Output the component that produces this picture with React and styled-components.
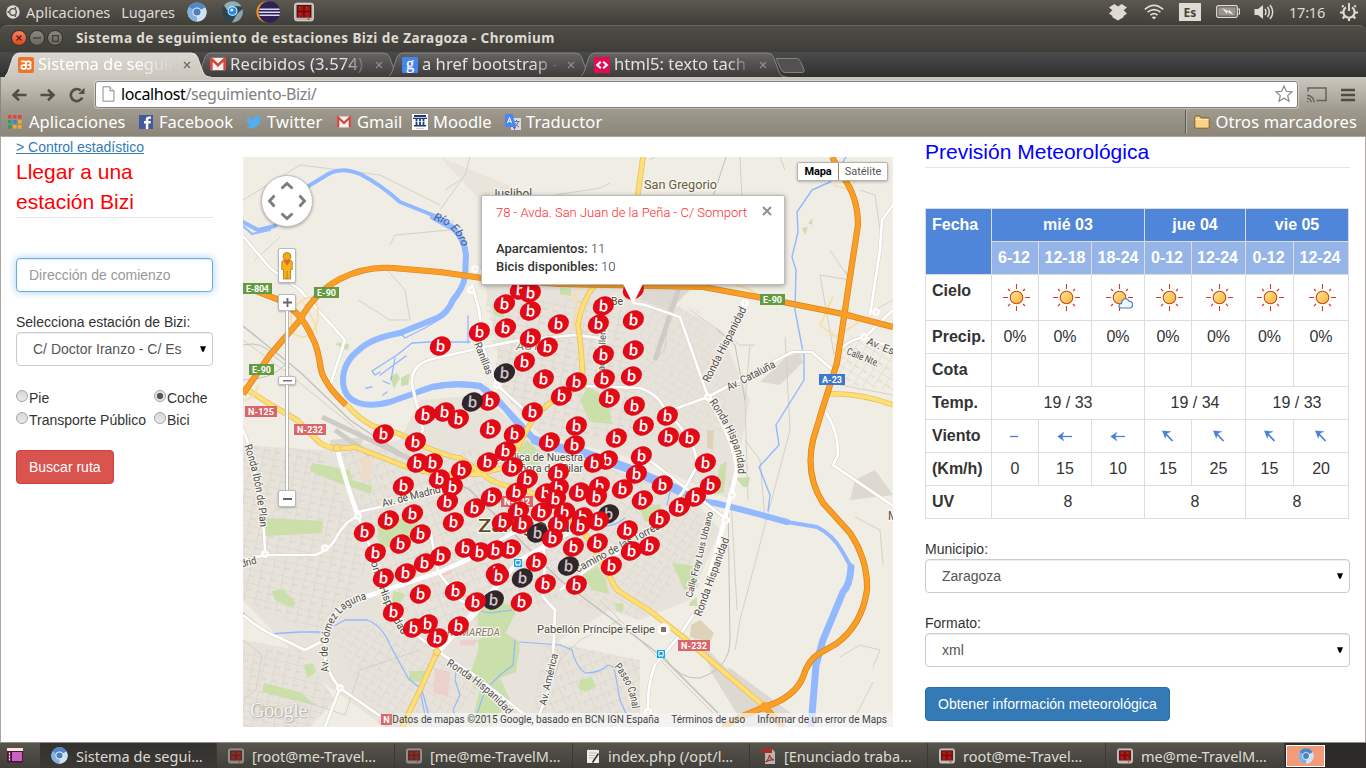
import React from "react";
import styled, { createGlobalStyle, css } from "styled-components";

const ubuntu = `"Noto Sans", "Open Sans", sans-serif`;
const arial = `"Liberation Sans", Arial, sans-serif`;
const roboto = `Roboto, "Liberation Sans", sans-serif`;

const GlobalStyle = createGlobalStyle`
  * { box-sizing: border-box; }
  body { margin: 0; overflow: hidden; background: #fff; }
  svg { display: block; flex: none; }
  button, input { font: inherit; }
`;

const Screen = styled.div`
  width: 1366px;
  height: 768px;
  display: flex;
  flex-direction: column;
  overflow: hidden;
  background: #3c3b37;
`;

/* ---------- desktop top panel ---------- */
const TopPanel = styled.header`
  height: 25px;
  display: flex;
  align-items: center;
  padding: 0 8px 2px 6px;
  background: linear-gradient(#5b5850, #3f3e39);
  color: #dfdbd2;
  font: 14.5px/22px ${ubuntu};
`;
const PanelText = styled.span`
  margin-left: ${(p) => p.$gap || 0}px;
  letter-spacing: ${(p) => p.$ls || 0}px;
  white-space: nowrap;
`;
const Slot = styled.span`
  display: flex;
  margin-left: ${(p) => p.$gap}px;
`;
const Tray = styled.div`
  margin-left: auto;
  display: flex;
  align-items: center;
`;
const LangBox = styled.span`
  margin-left: 15px;
  width: 22px;
  height: 18px;
  background: #dfdbd2;
  color: #45433d;
  font: bold 12px/20px ${ubuntu};
  text-align: center;
`;

/* ---------- window frame ---------- */
const TitleBar = styled.div`
  height: 27px;
  display: flex;
  align-items: center;
  gap: 2px;
  padding: 0 0 2px 11px;
  border-top: 1px solid #6a675e;
  border-radius: 7px 7px 0 0;
  background: linear-gradient(#504d46, #3e3d39);
`;
const WinButton = styled.span`
  width: 16px;
  height: 16px;
  border-radius: 50%;
  display: grid;
  place-items: center;
  border: 1px solid #33322e;
  background: ${(p) => (p.$close ? "linear-gradient(#f58362, #e0481c)" : "linear-gradient(#8b887d, #67655d)")};
`;
const TitleText = styled.span`
  margin-left: 11px;
  color: #dfdbd2;
  font: bold 13.5px/24px ${ubuntu};
  letter-spacing: 0.43px;
  white-space: nowrap;
`;

const TabStrip = styled.div`
  height: 25px;
  display: flex;
  padding-left: 5px;
  background: linear-gradient(#4c4b4b, #303030);
`;
const TabBox = styled.div`
  position: relative;
  z-index: ${(p) => (p.$active ? 2 : 1)};
  width: 192px;
  height: 25px;
  display: flex;
  align-items: center;
  padding-left: 13px;
`;
const TabShape = styled.svg`
  position: absolute;
  left: 0;
  top: 0;
`;
const TabIcon = styled.span`
  position: relative;
  width: 16px;
  height: 16px;
`;
const TabLabel = styled.span`
  position: relative;
  margin: -2px 0 0 4px;
  width: 138px;
  overflow: hidden;
  white-space: nowrap;
  color: ${(p) => (p.$active ? "#fff" : "#e3e1dc")};
  font: 16.6px/23px ${ubuntu};
  letter-spacing: ${(p) => p.$ls || 0}px;
  mask-image: linear-gradient(90deg, #000 ${(p) => p.$fade}%, transparent 100%);
`;
const TabClose = styled.svg`
  position: relative;
  margin-left: 7px;
`;

const Toolbar = styled.div`
  height: 59px;
  display: flex;
  flex-direction: column;
  background: linear-gradient(#cbc7be, #bdb8ae 20%, #9f998e 56%, #8b8679);
  border-left: 1px solid #8d887c;
`;
const AddressRow = styled.div`
  height: 32px;
  display: flex;
  align-items: center;
  padding: 3px 9px 0 10px;
`;
const AddressBox = styled.div`
  margin-left: 10px;
  width: 1203px;
  height: 27px;
  display: flex;
  align-items: center;
  padding: 0 4px 0 6px;
  background: #fff;
  border: 1px solid #85817a;
  border-radius: 3px;
  box-shadow: 0 0 0 1px rgba(255, 255, 255, 0.35);
  color: #808080;
  font: 16px/22px ${ubuntu};
  letter-spacing: -0.35px;
  padding-bottom: 2px;
`;
const Host = styled.span`
  margin-left: 6px;
  color: #000;
`;
const AddressIcon = styled.span`
  margin-left: auto;
`;
const BookmarkRow = styled.div`
  height: 27px;
  display: flex;
  align-items: center;
  padding: 0 9px 2px 7px;
  color: #fff;
  font: 16.5px/24px ${ubuntu};
`;
const Bookmark = styled.span`
  display: flex;
  align-items: center;
  gap: ${(p) => p.$gap || 5}px;
  width: ${(p) => (p.$w ? p.$w + "px" : "auto")};
  white-space: nowrap;
  letter-spacing: ${(p) => p.$ls || 0}px;
`;
const OtherBookmarks = styled.div`
  margin-left: auto;
  display: flex;
  align-items: center;
  padding-left: 8px;
  border-left: 1px solid #5d5a52;
  box-shadow: inset 1px 0 0 #b6b1a6;
`;

/* ---------- web page ---------- */
const Page = styled.main`
  height: 607px;
  display: flex;
  align-items: flex-start;
  background: #fff;
  border: 1px solid #aaa7a1;
  border-bottom-color: #8e8f80;
  padding: 0 15px;
  color: #333;
  font: 14px/20px ${arial};
`;
const LeftColumn = styled.section`
  width: 197px;
  display: flex;
  flex-direction: column;
  align-items: flex-start;
`;
const MapColumn = styled.section`
  margin: 20px 32px 0 30px;
  width: 650px;
`;
const RightColumn = styled.section`
  width: 425px;
  display: flex;
  flex-direction: column;
  align-items: flex-start;
`;
const StatsLink = styled.a`
  color: #337ab7;
  text-decoration: underline;
`;
const Legend = styled.h2`
  margin: 0 0 40px;
  width: 100%;
  border-bottom: 1px solid #e5e5e5;
  color: ${(p) => p.$color};
  font: 21px/30px ${arial};
`;
const control = css`
  width: 100%;
  height: 34px;
  border-radius: 4px;
  background: #fff;
  font: 14px/20px ${arial};
`;
const AddressInput = styled.input`
  ${control}
  padding: 6px 12px;
  border: 1px solid #66afe9;
  outline: 0;
  box-shadow: inset 0 1px 1px rgba(0, 0, 0, 0.075), 0 0 8px rgba(102, 175, 233, 0.6);
  &::placeholder { color: #999; opacity: 1; }
`;
const Label = styled.label`
  margin-top: 20px;
`;
const SelectBox = styled.div`
  ${control}
  display: flex;
  align-items: center;
  justify-content: space-between;
  padding: 0 6px 0 16px;
  border: 1px solid #ccc;
  box-shadow: inset 0 1px 1px rgba(0, 0, 0, 0.075);
  color: #555;
  white-space: nowrap;
`;
const RadioGrid = styled.div`
  margin: 21px 0 19px;
  display: grid;
  grid-template-columns: 138px auto;
  grid-auto-rows: 22px;
`;
const RadioItem = styled.label`
  display: flex;
  align-items: center;
  gap: 1px;
  white-space: nowrap;
`;
const RadioDot = styled.span`
  width: 12px;
  height: 12px;
  margin-top: -4px;
  border: 1px solid #a5a5a5;
  border-radius: 50%;
  background: ${(p) =>
    p.$on ? "radial-gradient(circle, #555 0 2.8px, #e4e4e4 3.6px)" : "linear-gradient(#d8d8d8, #e9e9e9)"};
`;
const ActionButton = styled.button`
  height: 34px;
  padding: 0 12px;
  margin-top: ${(p) => p.$top || 0}px;
  border: 1px solid ${(p) => (p.$danger ? "#d43f3a" : "#2e6da4")};
  border-radius: 4px;
  background: ${(p) => (p.$danger ? "#d9534f" : "#337ab7")};
  color: #fff;
  font: 14px/20px ${arial};
  white-space: nowrap;
`;

/* ---------- forecast table ---------- */
const Forecast = styled.table`
  width: 424px;
  table-layout: fixed;
  border-collapse: collapse;
  font: 16px/20px ${arial};
`;
const Row = styled.tr`
  height: ${(p) => p.$h || 33}px;
`;
const Cell = styled.td`
  padding: 6px 0 0;
  border: 1px solid #ddd;
  text-align: center;
  vertical-align: top;
`;
const HeadCell = styled.th`
  padding: 6px 0 0 6px;
  border: 1px solid #ddd;
  text-align: left;
  vertical-align: top;
`;
const DayCell = styled(HeadCell)`
  padding-left: ${(p) => (p.$left ? 6 : 0)}px;
  text-align: ${(p) => (p.$left ? "left" : "center")};
  background: #4f86d9;
  color: #fff;
`;
const HourCell = styled(DayCell)`
  padding-left: 0;
  padding-right: ${(p) => p.$pad || 0}px;
  background: #95b5e9;
`;
const IconWrap = styled.span`
  display: inline-block;
  vertical-align: top;
  margin-left: ${(p) => p.$shift || 0}px;
  margin-top: ${(p) => p.$down || 0}px;
`;

/* ---------- map ---------- */
const MapFrame = styled.div`
  position: relative;
  width: 650px;
  height: 570px;
  overflow: hidden;
  background: #f0ede5;
  font-family: ${roboto};
`;
const InfoWindow = styled.div`
  position: absolute;
  left: 238px;
  top: 38px;
  width: 304px;
  height: 90px;
  padding: 8px 14px;
  background: #fff;
  border: 1px solid #bbb;
  border-radius: 2px;
  box-shadow: 0 1px 5px rgba(0, 0, 0, 0.35);
  color: #333;
  font: 13px/18px ${roboto};
`;
const InfoTitle = styled.div`
  margin-bottom: 18px;
  color: #ff2a2a;
  font-weight: 300;
  white-space: nowrap;
`;
const InfoLine = styled.div`
  font-weight: 300;
  b { font-weight: 500; }
`;
const InfoClose = styled.svg`
  position: absolute;
  right: 12px;
  top: 10px;
`;
const InfoTail = styled.svg`
  position: absolute;
  left: 379px;
  top: 126px;
`;
const PanControl = styled.div`
  position: absolute;
  left: 18px;
  top: 18px;
  width: 52px;
  height: 52px;
  border-radius: 50%;
  background: #fff;
  border: 1px solid #c4c1bb;
  box-shadow: 0 1px 3px rgba(0, 0, 0, 0.3);
`;
const ZoomControl = styled.div`
  position: absolute;
  left: 35px;
  top: 91px;
  width: 18px;
  display: flex;
  flex-direction: column;
  align-items: center;
`;
const SmallButton = styled.div`
  width: ${(p) => p.$w || 18}px;
  height: ${(p) => p.$h}px;
  margin-top: ${(p) => p.$top || 0}px;
  display: grid;
  place-items: center;
  background: #fff;
  border: 1px solid #bdbab4;
  border-radius: 2px;
  box-shadow: 0 1px 2px rgba(0, 0, 0, 0.25);
`;
const Track = styled.div`
  width: 4px;
  height: ${(p) => p.$h}px;
  background: #fff;
  border: solid #bbb8b2;
  border-width: 0 1px;
`;
const MapTypes = styled.div`
  position: absolute;
  left: 554px;
  top: 5px;
  display: flex;
  height: 19px;
  border: 1px solid #b5b2ad;
  border-radius: 2px;
  background: #fff;
  box-shadow: 0 1px 3px rgba(0, 0, 0, 0.25);
  font: 11px/17px ${roboto};
`;
const MapType = styled.span`
  width: ${(p) => p.$w}px;
  text-align: center;
  color: ${(p) => (p.$on ? "#000" : "#565656")};
  font-weight: ${(p) => (p.$on ? 700 : 400)};
  letter-spacing: ${(p) => (p.$on ? -0.15 : 0)}px;
  border-left: ${(p) => (p.$on ? "0" : "1px solid #a58654")};
`;
const Attribution = styled.div`
  position: absolute;
  right: 0;
  bottom: 0;
  height: 14px;
  width: 507px;
  display: flex;
  background: linear-gradient(90deg, rgba(245, 245, 245, 0), rgba(245, 245, 245, 0.75) 40px);
  color: #444;
  font: 10px/14px ${roboto};
  white-space: nowrap;
  padding-right: 6px;
  justify-content: flex-end;
  gap: 12px;
`;
const GoogleMark = styled.div`
  position: absolute;
  left: 7px;
  top: 541px;
  color: rgba(255, 255, 255, 0.85);
  font: 20px/24px "Liberation Serif", serif;
  letter-spacing: -0.3px;
  text-shadow: 0 0 2px #aaa, 1px 1px 1px #b5b5b5;
`;

/* ---------- bottom task bar ---------- */
const TaskBar = styled.footer`
  height: 25px;
  display: flex;
  background: linear-gradient(#57544c, #403f3a);
  color: #dfdbd2;
  font: 14.5px/24px ${ubuntu};
`;
const DesktopButton = styled.div`
  width: 40px;
  padding: 5px 0 0 7px;
`;
const Task = styled.div`
  width: ${(p) => p.$w}px;
  display: flex;
  align-items: center;
  gap: 8px;
  padding-left: ${(p) => p.$pl || 11}px;
  background: ${(p) => (p.$active ? "linear-gradient(#33322e, #3a3935)" : "transparent")};
  border-right: 1px solid #3a3935;
  white-space: nowrap;
`;
const TaskIcon = styled.span`
  opacity: ${(p) => (p.$dim ? 0.6 : 1)};
`;
const Workspaces = styled.div`
  flex: 1;
  display: flex;
  padding-left: 1px;
  background: #2c2b29;
`;
const Workspace = styled.div`
  width: 39px;
  height: 22px;
  margin-top: 2px;
  display: grid;
  place-items: center;
  border: 1px solid #fff;
  background: #f39a78;
`;

/* ---------- small drawings ---------- */
const Chromium = ({ s = 20 }) => (
  <svg width={s} height={s} viewBox="0 0 20 20">
    <circle cx="10" cy="10" r="9.6" fill="#b9d5ef" />
    <path d="M10 10 L1.7 5.2 A9.6 9.6 0 0 1 18.4 5.4 Z" fill="#5187c4" />
    <path d="M10 10 L18.4 5.4 A9.6 9.6 0 0 1 10 19.6 Z" fill="#cfe2f5" />
    <path d="M10 10 L10 19.6 A9.6 9.6 0 0 1 1.7 5.2 Z" fill="#86b0dd" />
    <circle cx="10" cy="10" r="4.6" fill="#e8f2fb" />
    <circle cx="10" cy="10" r="3.6" fill="#4a80c0" />
  </svg>
);
const DarkOrb = () => (
  <svg width="23" height="22" viewBox="0 0 23 22">
    <circle cx="11.5" cy="11" r="10.5" fill="#2f444d" />
    <path d="M3 4.5 A10.5 10.5 0 0 1 20.5 5.5 L12 5 L6 9 Z" fill="#8fb0bb" />
    <path d="M11 21.400 L16 13 L21.500 8 A10.500 10.500 0 0 1 11 21.400" fill="#8ea2aa" />
    <circle cx="11.5" cy="10" r="5" fill="#c6e9fa" />
    <circle cx="11.5" cy="10" r="3.8" fill="#1b8be8" />
    <circle cx="10.8" cy="9" r="1.6" fill="#d9f3ff" />
  </svg>
);
const Eclipse = () => (
  <svg width="25" height="22" viewBox="0 0 25 22">
    <circle cx="11" cy="11" r="10.6" fill="#f7941e" />
    <circle cx="13.4" cy="11" r="10.8" fill="#2c2255" />
    <path d="M3.5 8.2h20M3 11.2h21M3.5 14.2h20" stroke="#dcd9ee" strokeWidth="1.5" />
  </svg>
);
const RedTerm = ({ s = 20 }) => (
  <svg width={s} height={s} viewBox="0 0 20 20">
    <rect x="0.7" y="1.2" width="18.6" height="17.6" rx="2" fill="#b8b6b0" stroke="#dedcd6" />
    <rect x="2.6" y="3" width="14.8" height="12.6" fill="#5c0b0b" />
    <path d="M4 4h5.4v5H4zM10.6 4H16v5h-5.400zM4 10h5.400v5H4zM10.600 10H16v5h-5.400z" fill="#a51414" />
    <path d="M5 5l2 1.500M12 5l2 1.500M5 11l2 1.500M12 11l2 1.500" stroke="#c93a3a" strokeWidth=".8" />
    <path d="M13.500 17.300h2" stroke="#e22" strokeWidth="1.400" />
  </svg>
);
const UbuntuMark = () => (
  <svg width="14" height="14" viewBox="0 0 14 14">
    <circle cx="7" cy="7" r="6.700" fill="#dfdbd2" />
    <circle cx="7" cy="7" r="3.300" fill="none" stroke="#4c4a43" strokeWidth="1.300" />
    <path d="M3.300 7H1.500M8.900 3.800l.9-1.600M8.900 10.200l.9 1.600" stroke="#dfdbd2" strokeWidth="2.400" />
    <circle cx="2.400" cy="7" r="1" fill="#4c4a43" />
    <circle cx="9.300" cy="3" r="1" fill="#4c4a43" />
    <circle cx="9.300" cy="11" r="1" fill="#4c4a43" />
  </svg>
);
const Dropbox = () => (
  <svg width="18" height="18" viewBox="0 0 18 18" fill="#dfdbd2">
    <path d="M5.300 1L0 4.400 3.400 7.300 0 10.600 3.400 13 V14.200L9 17.400l5.600-3.200V13L18 10.600 14.600 7.300 18 4.400 12.700 1 9 3.600z" />
  </svg>
);
const Wifi = () => (
  <svg width="20" height="16" viewBox="0 0 20 16" fill="none" stroke="#dfdbd2" strokeWidth="1.700">
    <path d="M.8 5.400Q10-2.800 19.200 5.400M3.600 8.200q6.400-5.200 12.800 0M6.400 11q3.600-2.800 7.200 0" />
    <path d="M10 15.500l-2.300-2.300q2.300-1.600 4.600 0z" fill="#dfdbd2" stroke="none" />
  </svg>
);
const Battery = () => (
  <svg width="24" height="13" viewBox="0 0 24 13">
    <rect x=".7" y=".7" width="20.600" height="11.600" rx="1.500" fill="none" stroke="#dfdbd2" strokeWidth="1.300" />
    <path d="M21.500 4h2v5h-2" fill="none" stroke="#dfdbd2" strokeWidth="1.200" />
    <rect x="2.300" y="2.300" width="17.400" height="8.400" fill="#9b978d" />
    <path d="M6 3l7 3.400V4.500L17.500 10l-6.500-3.200V9z" fill="#f4f1ea" />
  </svg>
);
const Volume = () => (
  <svg width="21" height="18" viewBox="0 0 21 18">
    <path d="M.5 6H4L9 2v14l-5-4H.5z" fill="#dfdbd2" />
    <path d="M11 6q2 3 0 6M13.500 4q3.600 5 0 10M16 2q5.400 7 0 14" fill="none" stroke="#dfdbd2" strokeWidth="1.500" />
  </svg>
);
const Gear = () => (
  <svg width="18" height="18" viewBox="0 0 18 18" fill="none" stroke="#dfdbd2">
    <path d="M6 4.400a5.600 5.600 0 1 0 6 0" strokeWidth="2.200" />
    <path d="M9 0v8" strokeWidth="1.900" />
    <path d="M3.600 3.900L2.200 2.500M14.400 3.900l1.400-1.400M3 9.500H0M18 9.500h-3M4.500 13.600L2.700 15.400M13.500 13.600l1.800 1.800M9 15.300V18" strokeWidth="2.200" />
  </svg>
);
const NavArrow = ({ back }) => (
  <svg width="16" height="14" viewBox="0 0 16 14" fill="none" stroke="#504e49" strokeWidth="2.600">
    <path d={back ? "M15.500 7H2.500M8 1.800L2.500 7 8 12.200" : "M.5 7h13M8 1.800L13.500 7 8 12.200"} />
  </svg>
);
const Reload = () => (
  <svg width="16" height="16" viewBox="0 0 16 16">
    <path d="M13.300 10.500a6 6 0 1 1-1.600-7" fill="none" stroke="#504e49" strokeWidth="2.600" />
    <path d="M15.500.8V7H9.300z" fill="#504e49" />
  </svg>
);
const PageIcon = () => (
  <svg width="13" height="16" viewBox="0 0 13 16">
    <path d="M1 .8h7l4 4v10.400H1z" fill="#fff" stroke="#8a8a8a" />
    <path d="M8 .8v4h4" fill="#eee" stroke="#8a8a8a" />
  </svg>
);
const Gmail = ({ w = 14, h = 12 }) => (
  <svg width={w} height={h} viewBox="0 0 14 12">
    <rect x=".3" y=".5" width="13.400" height="11" rx="1" fill="#f3f1ee" />
    <path d="M1.200 11.500V1.500L7 7l5.800-5.500v10" fill="none" stroke="#d8433a" strokeWidth="2.200" />
  </svg>
);
const Facebook = () => (
  <svg width="14" height="14" viewBox="0 0 14 14">
    <rect width="14" height="14" fill="#3f5b9b" />
    <path d="M9.300 14V8.500h2.200l.4-2.400H9.300V4.700q0-1 1.200-1H12V1.500h-2Q6.800 1.500 6.800 4.400v1.700H5v2.400h1.800V14z" fill="#fff" />
  </svg>
);
const Twitter = () => (
  <svg width="16" height="14" viewBox="0 0 24 20">
    <path d="M24 2.400a9.600 9.600 0 0 1-2.800.8A5 5 0 0 0 23.300.5a9.700 9.700 0 0 1-3.100 1.200 4.900 4.900 0 0 0-8.400 4.500A14 14 0 0 1 1.700 1a5 5 0 0 0 1.500 6.600A4.800 4.800 0 0 1 1 7v.1a4.900 4.900 0 0 0 3.900 4.800 4.800 4.800 0 0 1-2.200.1 4.900 4.900 0 0 0 4.600 3.400A9.900 9.900 0 0 1 0 17.500 14 14 0 0 0 21.500 5z" fill="#55acee" />
  </svg>
);
const Apps = () => (
  <svg width="14" height="14" viewBox="0 0 14 14">
    {["#e2453c", "#e2453c", "#e2453c", "#2f9e59", "#3f7fe8", "#f2ab27", "#2f9e59", "#f2ab27", "#f2ab27"].map((c, i) => (
      <rect key={i} x={(i % 3) * 5} y={Math.floor(i / 3) * 5} width="3.600" height="3.600" fill={c} />
    ))}
  </svg>
);
const Moodle = () => (
  <svg width="16" height="16" viewBox="0 0 16 16">
    <rect width="16" height="16" fill="#fff" />
    <path d="M2 1h12v2H2zM1 3.800h14v1.200H1zM2 11h12v1.500H2z" fill="#1d3a6e" />
    <path d="M4.500 5v6M8 5v6M11.500 5v6" stroke="#1d3a6e" strokeWidth="1.800" />
    <path d="M3 7.500h10" stroke="#fff" strokeWidth=".6" />
    <path d="M4 14.500h8" stroke="#c9cede" />
  </svg>
);
const Translate = () => (
  <svg width="16" height="16" viewBox="0 0 16 16">
    <rect x="6" y="4" width="10" height="12" fill="#dcdcdc" />
    <path d="M8.500 7.500h6M11.500 6v1.500M13.500 7.500q-1 4-4.500 5.500M10 9q1.500 3 4 4" fill="none" stroke="#5f7a94" />
    <path d="M0 0h7.500l3.500 13H0z" fill="#4a87f3" />
    <path d="M2.500 9l2-5.500 2 5.500M3.200 7.300h2.600" fill="none" stroke="#fff" />
    <path d="M8 13h3l-1.500 3z" fill="#3367c8" />
  </svg>
);
const Folder = () => (
  <svg width="16" height="14" viewBox="0 0 16 14">
    <path d="M.8 2.500Q.8 1 2 1h3.500l1.500 2h7.200q1 0 1 1v8q0 1.200-1 1.200H2Q.8 13.200.8 12z" fill="#fbd28a" stroke="#8b5a1e" />
    <path d="M1.500 4.500h13" stroke="#fff0c9" />
  </svg>
);
const Xampp = () => (
  <svg width="16" height="16" viewBox="0 0 16 16">
    <rect width="16" height="16" rx="2" fill="#ee7427" />
    <path d="M3.200 4.300H6q2 0 2 2t-2 1.700H5.300q-2 0-2 1.900t2 1.900H6q2 0 2-2V6.300q0-2 2-2h.7q2 0 2 1.800T10.700 8H9.500h1.200q2 0 2 1.900t-2 1.900H8.800" fill="none" stroke="#fff" strokeWidth="1.700" />
  </svg>
);
const GoogleTile = () => (
  <svg width="16" height="16" viewBox="0 0 16 16">
    <rect width="16" height="16" rx="1" fill="#4684ee" />
    <text x="8" y="11.500" textAnchor="middle" fill="#fff" stroke="#fff" strokeWidth=".3" fontFamily="Liberation Serif, serif" fontSize="16">g</text>
  </svg>
);
const CodeTile = () => (
  <svg width="16" height="16" viewBox="0 0 16 16">
    <rect width="16" height="16" fill="#e40b53" />
    <path d="M6.800 4.800L3.200 8l3.600 3.200M9.200 4.800L12.800 8l-3.600 3.200" fill="none" stroke="#fff" strokeWidth="2.200" />
  </svg>
);
const Star = () => (
  <svg width="18" height="18" viewBox="0 0 18 18">
    <path d="M9 1l2.300 5.300 5.700.5-4.300 3.800 1.300 5.700L9 13.300l-5 3 1.300-5.700L1 6.800l5.700-.5z" fill="#fff" stroke="#8a8a8a" strokeWidth="1.200" />
  </svg>
);
const Cast = () => (
  <svg width="20" height="16" viewBox="0 0 20 16" fill="none" stroke="#66635c" strokeWidth="1.500">
    <path d="M1 4.500V1h18v12.500H9.500" />
    <path d="M0 8.200a7 7 0 0 1 7 7M0 11.200a4 4 0 0 1 4 4M0 14.200l1 1" />
  </svg>
);
const Caret = () => (
  <svg width="6" height="6" viewBox="0 0 6 6"><path d="M0 .3h6L3.700 5.800H2.300z" fill="#000" /></svg>
);
const Pdf = () => (
  <svg width="15" height="16" viewBox="0 0 15 16">
    <path d="M4 1h7l3 3v12H4z" fill="#b9b5ae" />
    <rect x="0" y="0" width="11" height="5" fill="#a12f2b" />
    <path d="M4.500 14q3-2 4-7 1 4 4.500 5-5-.5-8.500 2" fill="none" stroke="#a12f2b" strokeWidth="1.200" />
  </svg>
);
const Editor = () => (
  <svg width="14" height="16" viewBox="0 0 14 16">
    <path d="M1 2h12v13H1z" fill="#ececea" />
    <path d="M2 1.500h10" stroke="#777" strokeDasharray="1 1" />
    <path d="M3 5h8M3 7.500h6M3 10h5" stroke="#bbb" />
    <path d="M12.500 5.500l-5 7.500-1 1.500" stroke="#333" strokeWidth="1.600" />
  </svg>
);

/* ---------- browser tabs ---------- */
function Tab({ active, icon, label, fade, ls }) {
  return (
    <TabBox $active={active}>
      <TabShape width="208" height="25" viewBox="0 0 208 25">
        <defs>
          <linearGradient id="tabOn" x2="0" y2="1"><stop stopColor="#dad7d0" /><stop offset="1" stopColor="#cbc7be" /></linearGradient>
          <linearGradient id="tabOff" x2="0" y2="1"><stop stopColor="#666461" /><stop offset="1" stopColor="#3d3c3b" /></linearGradient>
        </defs>
        <path
          d="M-4 25 Q1 25 3 20 L8 5 Q10 1 14 1 H186 Q191 1 192.500 5 L198 20 Q200 25 206 25"
          fill={active ? "url(#tabOn)" : "url(#tabOff)"}
          stroke={active ? "#e9e7e2" : "#8a8885"}
          strokeWidth=".9"
        />
      </TabShape>
      <TabIcon>{icon}</TabIcon>
      <TabLabel $active={active} $fade={fade} $ls={ls}>{label}</TabLabel>
      <TabClose width="8" height="8" viewBox="0 0 8 8" stroke={active ? "#6b6963" : "#8d8b87"} strokeWidth="1.300">
        <path d="M1 1l6 6M7 1L1 7" />
      </TabClose>
    </TabBox>
  );
}

/* ---------- map data, in map coordinates offset by (243, 157) ---------- */
const stations = [
  [520, 290], [530, 293], [504, 304], [530, 311], [558, 324], [505, 328], [479, 332], [530, 338], [547, 347],
  [440, 346], [524, 362], [504, 373, 1], [543, 379], [561, 396], [489, 401], [472, 402, 1], [532, 412],
  [425, 415], [444, 412], [458, 419], [383, 434], [415, 442], [490, 429], [514, 434], [549, 442],
  [505, 451], [633, 290], [603, 306], [598, 324], [633, 320], [603, 355], [633, 350], [631, 376], [604, 379],
  [576, 382], [609, 398], [634, 406], [667, 416], [643, 426], [668, 437], [689, 438], [616, 438],
  [576, 426], [574, 445], [641, 456], [417, 463], [432, 463], [461, 470], [439, 479], [452, 487], [403, 486],
  [487, 462], [512, 467], [527, 479], [558, 473], [447, 502], [491, 497], [474, 508], [516, 492], [545, 493],
  [558, 488], [555, 499], [453, 522], [412, 514], [388, 520], [364, 532], [502, 522], [518, 511], [522, 524],
  [541, 512], [564, 512], [537, 533, 1], [558, 524], [552, 538], [420, 534], [400, 544], [375, 553], [440, 556],
  [465, 548], [479, 552], [495, 550], [510, 549], [424, 563], [405, 573], [383, 578], [496, 573], [498, 576],
  [536, 562], [522, 578, 1], [545, 584], [568, 566, 1], [420, 594], [455, 591], [493, 600, 1], [475, 602],
  [521, 602], [393, 612], [427, 624], [413, 628], [458, 626], [437, 638], [705, 463], [607, 460], [594, 463],
  [636, 474], [662, 485], [710, 485], [695, 497], [679, 507], [622, 489], [642, 500], [599, 486], [579, 492],
  [596, 497], [608, 514, 1], [582, 517], [659, 519], [598, 521], [580, 526], [627, 530], [597, 543], [573, 547],
  [631, 551], [649, 546], [611, 566], [576, 585],
];

const River = "M433 217 L453 228 Q465 240 466 255 L465 277 Q463 288 453 300 Q447 314 437 318 L400 333 Q372 338 360 349 Q343 362 343 380 Q343 398 359 403 Q372 407 390 402 L432 387 Q455 382 480 386 Q495 395 505 408 Q520 428 535 440 Q553 449 575 450 L627 468 L683 492 Q700 502 715 503 L743 510 L787 522";

const greens = [
  "M265 518 L323 521 L322 533 L265 536 Z", "M312 463 L350 470 L352 480 L372 486 L371 494 L333 481 L310 471 Z",
  "M377 524 L420 515 L412 541 L380 549 Z", "M475 609 L520 602 L505 635 L520 650 L512 672 L498 662 L475 690 L470 674 L482 640 Z",
  "M478 640 L500 630 L520 642 L516 672 L500 678 L510 700 L490 727 L470 727 L480 690 Z",
  "M580 400 L588 387 L608 398 L612 424 L590 422 Z", "M672 563 L696 566 L698 587 L684 590 Z",
  "M583 575 L597 566 L606 580 L609 594 L592 590 Z", "M580 680 L592 677 L596 687 L585 692 L578 688 Z",
  "M390 377 L397 373 L400 378 L394 389 Z", "M401 378 L410 373 L408 385 L401 386 Z", "M560 288 L571 289 L571 296 L560 294 Z",
  "M394 591 L405 594 L399 605 L390 608 Z", "M410 671 L426 671 L420 682 L408 681 Z", "M303 665 L313 663 L316 672 L308 678 Z",
  "M272 591 L283 589 L296 603 L292 608 L275 600 Z", "M640 510 L660 504 L663 520 L645 522 Z", "M720 465 L727 461 L724 492 L714 495 Z",
  "M808 223 L813 218 L812 225 Z M802 228 L808 227 L805 235 Z", "M615 603 L624 604 L622 613 L616 610 Z", "M343 343 L349 344 L348 350 L342 349 Z M335 344 L341 342 L341 347 Z",
  "M527 440 L540 452 L540 475 L510 460 Z", "M492 307 L503 300 L504 318 L494 315 Z", "M690 602 L697 597 L697 606 L689 606 Z",
  "M264 683 L300 692 L316 706 L306 703 L262 692 Z M736 478 L750 477 L748 487 L743 487 Z",
];

const minorWhite = [
  "M243 560 L265 555 L315 555 Q328 551 335 540 Q345 520 358 517", "M337 448 Q345 480 358 516 L375 560 Q385 600 410 630 L440 653 L470 672 Q500 695 540 727",
  "M358 512 L403 502 L447 489", "M325 727 L340 688 L380 716", "M340 688 Q322 668 325 640 Q328 605 365 597 L440 572 L520 530",
  "M265 555 Q265 510 247 440 L243 430", "M417 445 L423 430 L412 385 Q410 365 432 359 L480 348 L520 340 L575 335 L600 338",
  "M472 284 L479 310 L484 350 L497 385 L530 415", "M480 275 L490 240", "M583 386 L640 388 Q660 395 666 412 Q697 440 697 466 L683 492 L640 545 L600 560 L560 590",
  "M633 303 L645 305 L680 317 L708 397", "M666 412 L708 397 L792 352 L812 352 L835 372", "M708 397 Q735 440 737 470 L722 530 L703 600 L680 635 L655 665 Q647 685 648 712",
  "M835 357 Q845 340 865 337 L893 310 M865 337 L893 348", "M870 315 L880 250 L882 220 L893 205", "M820 405 Q838 425 838 455 L833 465 L893 506",
  "M645 457 L725 518", "M440 650 L475 615 L520 560 L560 538 L600 520", "M500 540 L540 514 M430 530 L438 572 L460 600 L475 608",
  "M540 514 Q547 560 543 597 L555 610 L552 680 L535 727", "M243 615 Q263 632 280 638 L305 650 L325 640", "M243 236 L270 268 L300 290 L345 340 L330 385",
];

const thin = [
  "M243 200 L300 165 L380 175 L440 205", "M280 237 L255 260 M390 245 L395 235 L450 230 L453 220", "M358 300 L390 320 L410 320 L405 290 L382 264",
  "M440 210 L465 175 L470 157 M445 190 L460 180", "M555 195 L600 188 L610 183", "M650 160 L655 157 M740 157 L745 260 M785 170 L780 157",
  "M670 300 L665 350 L640 375 M690 310 L740 345 L755 345", "M860 190 L875 195 L880 230 M830 250 L850 280 L845 270", "M750 345 L745 400 L748 500",
  "M785 337 L790 430 L740 620 L735 650", "M745 440 L760 460 L765 520", "M850 280 L820 275 L835 360", "M730 480 L737 610 M840 657 L860 645 L880 650 L873 667 M873 682 L850 727",
  "M893 300 L875 310 M840 385 L893 395 M855 517 L880 530 L883 565", "M243 340 L290 375 L370 440", "M243 640 L262 655 L256 690 L243 700",
  "M300 700 L345 715 L360 670 L420 650", "M620 620 L580 640 L560 660 L540 720", "M600 600 L650 650 L720 720",
];

const labels = [
  { t: "San Gregorio", x: 644, y: 189, s: 12.5, w: 73, c: "#695c40" },
  { t: "Juslibol", x: 491, y: 198, s: 12.5, w: 41, c: "#554e42" },
  { t: "ACTUR", x: 516, y: 350, s: 10, w: 40, c: "#8b8070", i: 1 },
  { t: "Basílica de Nuestra", x: 494, y: 461, s: 11, w: 89 },
  { t: "Señora del Pilar", x: 508, y: 472, s: 11, w: 75 },
  { t: "Zaragoza", x: 478, y: 532, s: 19, w: 92, c: "#5f4d2b", b: 500 },
  { t: "ROMAREDA", x: 447, y: 636, s: 10, w: 53, c: "#857a69", i: 1 },
  { t: "Pabellón Príncipe Felipe", x: 537, y: 633, s: 11.5, w: 118 },
  { t: "Av. Cataluña", x: 729, y: 391, s: 11, w: 53, r: -27 },
  { t: "Ronda Hispanidad", x: 709, y: 383, s: 11, w: 83, r: -63 },
  { t: "Ronda Hispanidad", x: 701, y: 617, s: 11, w: 83, r: -70 },
  { t: "Calle Fray Luis Urbano", x: 692, y: 598, s: 9.5, w: 88, r: -76 },
  { t: "Calle Nte.", x: 846, y: 354, s: 10, w: 34, r: 22 },
  { t: "Av. Estudiantes", x: 866, y: 344, s: 10.5, w: 74, r: 22 },
  { t: "Av. de Madrid", x: 383, y: 507, s: 11, w: 60, r: -14 },
  { t: "Ranillas", x: 474, y: 344, s: 10.5, w: 34, r: 68 },
  { t: "Av. América", x: 546, y: 706, s: 10.5, w: 53, r: -77 },
  { t: "Camino de las Torres", x: 577, y: 573, s: 11, w: 95, r: -28 },
  { t: "Salvador Allende", x: 604, y: 388, s: 10, w: 68, r: -88 },
  { t: "Madrid", x: 229, y: 571, s: 10.5, w: 29, r: -15 },
  { t: "M", x: 888, y: 520, s: 12, w: 10, c: "#6b5537" },
  { t: "Be", x: 611, y: 305, s: 10, w: 12 },
];
const curved = [
  { id: "ebro", d: "M433 220 Q458 226 464 253", t: "Río Ebro", w: 42, c: "#42608f", i: 1 },
  { id: "ibon", d: "M244 446 Q257 480 260 528", t: "Ronda Ibón de Plan", w: 83 },
  { id: "gomez", d: "M329 672 Q320 610 367 599", t: "Av. de Gómez Laguna", w: 92 },
  { id: "hisp", d: "M446 665 Q488 690 510 718", t: "Ronda Hispanidad", w: 80 },
  { id: "hisp2", d: "M709 402 Q740 445 738 476", t: "Ronda Hispanidad", w: 79 },
  { id: "hisp3", d: "M369 556 Q384 610 403 636", t: "Ronda Hispanidad", w: 86 },
  { id: "canal", d: "M614 667 Q630 685 632 709", t: "Paseo Canal", w: 46 },
];
const shields = [
  ["E-804", 243, 283, 29, "#649b42"], ["E-90", 314, 287, 25, "#649b42"], ["E-90", 249, 364, 25, "#649b42"], ["E-90", 760, 294, 25, "#649b42"],
  ["N-125", 245, 406, 32, "#d9666a"], ["N-232", 294, 424, 32, "#d9666a"], ["N-232", 678, 640, 32, "#d9666a"], ["N-232", 501, 496, 32, "#d9666a"],
  ["N", 381, 714, 11, "#d9666a"], ["A-23", 819, 374, 26, "#3e78cc"],
];

function CityMap() {
  const halo = { paintOrder: "stroke", stroke: "#f7f5f0", strokeWidth: 2.5, strokeLinejoin: "round" };
  return (
    <svg width="650" height="570" viewBox="243 157 650 570" fontFamily="Roboto, sans-serif">
      <defs>
        <pattern id="gridA" width="13" height="11" patternUnits="userSpaceOnUse" patternTransform="rotate(-22)">
          <path d="M0 0H13M0 0V11M6 0V5" stroke="#d6d2c9" strokeWidth="1" fill="none" />
        </pattern>
        <pattern id="gridB" width="11" height="14" patternUnits="userSpaceOnUse" patternTransform="rotate(12)">
          <path d="M0 0H11M0 0V14M0 7H6" stroke="#d5d1c8" strokeWidth="1" fill="none" />
        </pattern>
        <pattern id="gridC" width="15" height="9" patternUnits="userSpaceOnUse" patternTransform="rotate(-58)">
          <path d="M0 0H15M0 0V9M8 0V6" stroke="#d9d5cc" strokeWidth="1" fill="none" />
        </pattern>
      </defs>
      <rect x="243" y="157" width="650" height="570" fill="#f0ede5" />
      <path d="M440 157 L520 190 L560 230 L545 275 L480 200 Z" fill="#e9e5dc" />
      <g fill="#e8e3da">
        <path d="M243 445 L320 450 L400 440 L420 400 L480 395 L540 445 L690 495 L720 530 L690 600 L640 620 L610 610 L560 640 L530 727 L385 727 L320 680 L243 600 Z" />
        <path d="M485 285 L640 285 L720 330 L750 400 L730 500 L640 460 L540 435 L505 395 Z" />
        <path d="M540 640 L640 660 L640 727 L530 727 Z M243 640 L300 650 L335 700 L310 727 L243 727 Z" />
      </g>
      <path d="M243 445 L320 450 L370 560 L330 640 L243 600 Z M243 650 L300 650 L335 700 L310 727 L243 727 Z" fill="url(#gridB)" />
      <path d="M340 450 L540 450 L560 600 L440 640 L380 590 Z M545 640 L640 660 L640 727 L530 727 Z" fill="url(#gridA)" />
      <path d="M540 445 L690 495 L710 540 L640 620 L560 600 Z M330 630 L400 620 L480 690 L440 727 L380 727 Z M830 330 L893 350 L893 390 L840 385 Z" fill="url(#gridC)" />
      <path d="M485 300 L620 300 L640 440 L540 435 L500 390 Z" fill="url(#gridB)" />
      <path d="M640 290 L700 310 L735 430 L640 440 Z" fill="url(#gridC)" opacity=".7" />
      <g fill="#ddd8d0">
        <path d="M645 285 L690 290 L670 310 L640 300 Z M710 670 L730 668 L800 720 L745 727 Z M690 632 L765 707 L740 715 L712 670 Z M330 440 L365 437 L360 447 L330 452 Z M785 358 L800 352 L803 362 L780 385 L760 382 Z M855 480 L875 470 L893 495 L850 500 Z" />
      </g>
      <g fill="#ded3b8">
        <path d="M691 625 L700 620 L714 633 L710 642 L690 637 Z M259 706 L278 706 L282 716 L262 716 Z M707 430 L714 430 L713 450 L707 448 Z" />
        <path d="M362 456 L373 459 L369 480 L360 478 Z" fill="#eedcc6" />
        <path d="M435 668 L450 672 L448 697 L433 692 Z M438 570 L452 565 L452 574 L440 577 Z M460 640 L478 640 L474 646 L460 645 Z" fill="#ecd0cb" />
      </g>
      {greens.map((d, i) => <path key={i} d={d} fill="#cadfaa" />)}
      <g fill="none" stroke="#d5d1c6" strokeWidth="1">{thin.map((d, i) => <path key={i} d={d} />)}</g>
      <g fill="none" stroke="#c2c0be" strokeWidth="1.500">
        <path d="M243 326 L300 372 L350 420 Q400 455 470 490 L560 580 L660 655 L720 715" />
        <path d="M665 658 Q680 680 700 678 Q730 668 730 640 L728 500 M726 157 L712 200 M717 330 L735 345 L745 400" strokeWidth="1" />
        <path d="M243 345 Q262 340 275 357 L290 368 M243 380 Q270 380 285 365" strokeWidth="1" />
      </g>
      <path d="M322 417 L425 466 M335 430 L370 455 M680 285 L655 360" stroke="#cfccc7" strokeWidth="5" fill="none" />

      <g fill="none" stroke="#92b8ff" strokeLinecap="round" strokeLinejoin="round">
        <path d="M243 222 L258 230 L275 226 Q290 200 307 187 L330 173 Q343 167 360 174 Q380 184 400 202 L430 214 L445 220" strokeWidth="4" />
        <path d="M243 226 L252 234 L270 230" strokeWidth="2" />
        <path d={River} strokeWidth="6" />
        <path d="M535 440 Q553 449 575 450 L627 468 L683 492" strokeWidth="9" />
        <path d="M420 391 L432 387 Q455 382 480 386 L505 408 L535 440" strokeWidth="6" />
        <path d="M787 522 L817 527 Q833 535 842 551 L851 567" strokeWidth="4" />
        <path d="M851 567 Q850 585 843 592 Q830 623 823 640 L816 665 L811 727" strokeWidth="7" />
        <path d="M400 333 L405 338 L425 328 L440 319 M397 355 L372 371 L375 375 L380 372 M397 355 L412 343 L430 342 L470 342 M395 358 L391 380 M406 356 L380 375 M383 381 L390 384 M366 388 L372 387 M383 395 L387 392 M468 316 V343" strokeWidth="1.300" />
        <path d="M846 157 L838 170 L830 182 L812 190 L797 212 L798 232 L792 257 L796 270 L795 310 L804 357 L804 380 L776 425 L779 445 L759 467 L770 495 L768 511" strokeWidth="1.400" />
        <path d="M243 613 L268 634 L300 632 L323 632 L345 620 L367 620 Q382 625 390 645 L408 678 L422 690 L432 727" strokeWidth="1.300" />
        <path d="M420 690 L427 725 M457 665 L455 680 L460 695 L453 710 L460 727 M475 610 L490 613 L512 610 M515 640 L513 665 L500 675 L485 690 L475 720 M520 642 L560 645 L572 650 Q575 665 585 673 Q600 673 608 665 L614 667 L620 700 L632 727" strokeWidth="1.200" />
        <path d="M595 524 Q610 530 625 518 M667 505 L670 492 M590 388 L594 386" strokeWidth="1.200" />
      </g>

      <g fill="none" stroke="#d6d2ca" strokeWidth="3.800">{minorWhite.map((d, i) => <path key={i} d={d} />)}</g>
      <g fill="none" stroke="#fff" strokeWidth="2.700">{minorWhite.map((d, i) => <path key={i} d={d} />)}</g>
      <path d="M337 448 Q345 480 358 516 M440 650 L520 560 L560 538 M708 397 Q735 440 737 470 L722 530 L703 600 M365 597 L440 572 L500 545" fill="none" stroke="#fff" strokeWidth="4.500" />

      {[["#e3c06c", 5.6], ["#ffdf71", 4]].map(([c, w]) => (
        <g key={c} fill="none" stroke={c} strokeWidth={w}>
          <path d="M347 405 Q358 418 373 426 L400 434 L423 446 Q450 457 460 458 L480 472 Q495 486 520 488 L548 500 L570 522 Q587 533 592 545 L601 562 L617 590 L650 611 L683 637 L765 707" />
          <path d="M243 387 L273 406 L297 420 L320 443 Q332 451 355 447 L407 467 L440 475 L478 474 L507 467 L535 415 L560 395 L583 386 Q582 350 578 325 Q582 300 595 285" />
          <path d="M437 652 L420 690 L402 727" />
          <path d="M825 394 Q858 392 893 405" />
          <path d="M643 157 L637 200" />
        </g>
      ))}
      <g fill="none" stroke="#f7dfa6" strokeWidth="1.800">
        <path d="M292 327 Q288 310 300 302 Q315 290 318 310 Q318 335 303 337 Q290 335 292 327 M303 302 Q320 330 316 334 M243 400 Q255 400 258 385 M575 292 Q580 310 572 330 M590 284 Q575 290 572 300 M735 285 Q760 290 765 305 M833 297 L820 325 L835 337 L858 323 L845 305 M833 185 L850 190 L855 180" />
      </g>
      {[["#d9841c", 6.200], ["#fb9e25", 4.800]].map(([c, w]) => (
        <g key={c} fill="none" stroke={c} strokeWidth={w}>
          <path d="M243 394 L270 355 L300 320 Q315 292 340 279 Q365 266 393 268 L440 272 L482 278 L560 284 L703 287 L763 298 L843 314 L893 327" />
          <path d="M243 286 L277 299 Q300 310 312 337 Q318 347 321 370 Q325 385 346 405" />
          <path d="M832 157 L843 177 Q858 197 858 225 L850 277 L837 363 L823 407 L813 440 Q805 475 823 503 L850 533 Q868 560 867 590 Q862 625 836 644 L820 653 Q808 660 803 677 Q795 697 765 707 L740 717 L723 727" />
          <path d="M765 707 L783 727" />
        </g>
      ))}
      <path d="M302 318 Q318 288 342 276" fill="none" stroke="#fb9e25" strokeWidth="3" />
      <circle cx="765" cy="707" r="5" fill="#fb9e25" />
      {[[337, 448], [437, 652]].map(([x, y]) => <circle key={x} cx={x} cy={y} r="3.600" fill="#ffdf71" stroke="#e3c06c" />)}
      {[[358, 516], [265, 554], [325, 548], [340, 688], [726, 520], [732, 495], [648, 712], [708, 397], [876, 312], [864, 337], [475, 269], [471, 290], [497, 385], [745, 303]].map(([x, y]) => (
        <circle key={x} cx={x} cy={y} r="2.800" fill="#f0ede5" stroke="#fff" strokeWidth="2" />
      ))}

      {labels.map((l, i) => (
        <text key={i} x={l.x} y={l.y} fontSize={l.s} textLength={l.w} lengthAdjust="spacingAndGlyphs" fill={l.c || "#4d4a45"}
          fontWeight={l.b || 400} fontStyle={l.i ? "italic" : "normal"} transform={l.r ? `rotate(${l.r} ${l.x} ${l.y})` : undefined} {...halo}>{l.t}</text>
      ))}
      {curved.map((l) => (
        <g key={l.id}>
          <path id={l.id} d={l.d} fill="none" />
          <text fontSize="11" fill={l.c || "#4d4a45"} fontStyle={l.i ? "italic" : "normal"} {...halo} strokeWidth={l.i ? 0 : 2.500}>
            <textPath href={"#" + l.id} textLength={l.w} lengthAdjust="spacingAndGlyphs">{l.t}</textPath>
          </text>
        </g>
      ))}
      {shields.map(([t, x, y, w, c], i) => (
        <g key={i}>
          <rect x={x} y={y} width={w} height="11" fill={c} />
          <text x={x + w / 2} y={y + 9} fontSize="9" fontWeight="700" fill="#fff" textAnchor="middle" textLength={w > 12 ? w - 6 : undefined}>{t}</text>
        </g>
      ))}
      <circle cx="663.500" cy="629.500" r="6.500" fill="#fff" stroke="#ddd" strokeWidth=".6" />
      <rect x="661" y="627" width="5" height="5" fill="#8b6d61" />
      {[[514, 559], [657, 650]].map(([x, y]) => (
        <g key={x}>
          <rect x={x} y={y} width="8" height="8" fill="#14a5ea" />
          <path d={`M${x + 1.800} ${y + 1.500}h4.400v4.200h-4.400zM${x + 2} ${y + 6.300}h1.200M${x + 4.800} ${y + 6.300}h1.200`} fill="none" stroke="#fff" />
        </g>
      ))}

      {stations.map(([x, y, closed], i) => (
        <g key={i} transform={`translate(${x + 0.4} ${y})`}>
          <ellipse rx="11" ry="9.200" transform="rotate(-28)" fill={closed ? "#31262a" : "#e20a17"} />
          <text x="-4.600" y="5.500" transform="rotate(5)" fontSize="15.500" fontWeight="600" fontFamily="Open Sans, Noto Sans, sans-serif" fill={closed ? "#cfc9cc" : "#fff"}>b</text>
        </g>
      ))}
    </svg>
  );
}

function MapPanel() {
  return (
    <MapFrame>
      <CityMap />
      <GoogleMark>Google</GoogleMark>
      <Attribution>
        <span>Datos de mapas ©2015 Google, basado en BCN IGN España</span>
        <span>Términos de uso</span>
        <span>Informar de un error de Maps</span>
      </Attribution>
      <PanControl>
        <svg width="50" height="50" viewBox="0 0 50 50" fill="none" stroke="#7c7c7c" strokeWidth="2.800">
          <path d="M19.500 12.500l5.500-5 5.500 5M19.500 37.500l5.500 5 5.500-5M12.500 19.500l-5 5.500 5 5.500M37.500 19.500l5 5.500-5 5.500" />
        </svg>
      </PanControl>
      <ZoomControl>
        <SmallButton $h={35}>
          <svg width="12" height="28" viewBox="0 0 12 28">
            <circle cx="6" cy="4.500" r="4" fill="#f3a916" stroke="#b57409" strokeWidth=".8" />
            <path d="M.8 10q0-1.500 2-1.500h6.400q2 0 2 1.500v7.500H9.500V27h-7V17.500H.8z" fill="#f9b21b" stroke="#b57409" strokeWidth=".8" />
            <path d="M2.500 9h7L6 13.500z" fill="#e2633c" />
            <path d="M6 19v8" stroke="#b57409" strokeWidth=".8" />
          </svg>
        </SmallButton>
        <SmallButton $h={17} $top={11}>
          <svg width="9" height="9" stroke="#666" strokeWidth="1.800"><path d="M0 4.500h9M4.500 0v9" /></svg>
        </SmallButton>
        <Track $h={65} />
        <SmallButton $h={9}>
          <svg width="9" height="2"><rect width="9" height="1.500" fill="#777" /></svg>
        </SmallButton>
        <Track $h={105} />
        <SmallButton $h={17}>
          <svg width="9" height="2"><rect width="9" height="2" fill="#666" /></svg>
        </SmallButton>
      </ZoomControl>
      <MapTypes>
        <MapType $on $w={40}>Mapa</MapType>
        <MapType $w={49}>Satélite</MapType>
      </MapTypes>
      <InfoWindow>
        <InfoTitle>78 - Avda. San Juan de la Peña - C/ Somport</InfoTitle>
        <InfoLine><b>Aparcamientos:</b> 11</InfoLine>
        <InfoLine><b>Bicis disponibles:</b> 10</InfoLine>
        <InfoClose width="10" height="10" stroke="#8f8f8f" strokeWidth="2"><path d="M1 1l8 8M9 1L1 9" /></InfoClose>
      </InfoWindow>
      <InfoTail width="22" height="22"><path d="M1 1L11 21 21 1z" fill="#fff" /></InfoTail>
    </MapFrame>
  );
}

/* ---------- forecast ---------- */
const Sun = ({ cloudy }) => (
  <svg width="28" height="28" viewBox="0 0 28 28">
    <defs>
      <linearGradient id="sunFill" x2="1" y2="1"><stop stopColor="#ffeaa0" /><stop offset="1" stopColor="#fbb02c" /></linearGradient>
    </defs>
    <path d="M14.500 1V6M14.500 23v5M1 14.500H6M23 14.500h5M6 6l2 2M21 21l2 2M6 23l2-2M21 8l2-2" stroke="#d23c2a" strokeWidth="1.100" />
    <circle cx="14.500" cy="14.500" r="6.300" fill="url(#sunFill)" stroke="#c4481f" strokeWidth="1.100" />
    {cloudy && <path d="M16.500 25q-3 0-2.500-2.700.4-1.800 2.500-2 .2-3.500 3-4.500 3-.6 4.500 2.300 3.600.4 3.600 3.600 0 3-2.600 3.300z" fill="#f3f8ff" stroke="#4b7dc9" strokeWidth="1.200" />}
  </svg>
);
const Wind = ({ dir }) => (
  <svg width="16" height="16" viewBox="0 0 16 16" fill="#4a7fd6" stroke="#4a7fd6">
    {dir === "-" && <path d="M3 8.500h8" strokeWidth="1.300" />}
    {dir === "W" && (<><path d="M4 8.500h11" strokeWidth="1.300" /><path d="M.6 8.500L7 4 5 8.500 7 13z" strokeWidth=".3" /></>)}
    {dir === "NW" && (<><path d="M5 5l7.500 8" strokeWidth="1.800" /><path d="M2.300 2.800l8.700.8-4.400 2-1.300 4.800z" strokeWidth=".3" /></>)}
  </svg>
);

const hours = ["6-12", "12-18", "18-24", "0-12", "12-24", "0-12", "12-24"];
const winds = ["-", "W", "W", "NW", "NW", "NW", "NW"];
const speeds = [0, 15, 10, 15, 25, 15, 20];
const columns = [66, 47, 53, 53, 47, 54, 48, 55];

function ForecastTable() {
  return (
    <Forecast>
      <colgroup>{columns.map((w, i) => <col key={i} width={w} />)}</colgroup>
      <tbody>
        <Row>
          <DayCell rowSpan={2} $left>Fecha</DayCell>
          <DayCell colSpan={3}>mié 03</DayCell>
          <DayCell colSpan={2}>jue 04</DayCell>
          <DayCell colSpan={2}>vie 05</DayCell>
        </Row>
        <Row>{hours.map((h, i) => <HourCell key={i} $pad={i === 0 || i > 2 ? 2 : 0}>{h}</HourCell>)}</Row>
        <Row $h={46}>
          <HeadCell>Cielo</HeadCell>
          {hours.map((h, i) => <Cell key={i}><IconWrap $shift={1} $down={2}><Sun cloudy={i === 2} /></IconWrap></Cell>)}
        </Row>
        <Row><HeadCell>Precip.</HeadCell>{hours.map((h, i) => <Cell key={i}>0%</Cell>)}</Row>
        <Row><HeadCell>Cota</HeadCell>{hours.map((h, i) => <Cell key={i} />)}</Row>
        <Row>
          <HeadCell>Temp.</HeadCell>
          <Cell colSpan={3}>19 / 33</Cell><Cell colSpan={2}>19 / 34</Cell><Cell colSpan={2}>19 / 33</Cell>
        </Row>
        <Row><HeadCell>Viento</HeadCell>{winds.map((d, i) => <Cell key={i}><IconWrap $down={2}><Wind dir={d} /></IconWrap></Cell>)}</Row>
        <Row><HeadCell>(Km/h)</HeadCell>{speeds.map((s, i) => <Cell key={i}>{s}</Cell>)}</Row>
        <Row>
          <HeadCell>UV</HeadCell>
          <Cell colSpan={3}>8</Cell><Cell colSpan={2}>8</Cell><Cell colSpan={2}>8</Cell>
        </Row>
      </tbody>
    </Forecast>
  );
}

const Select = ({ children }) => <SelectBox><span>{children}</span><Caret /></SelectBox>;
const Radio = ({ on, children }) => <RadioItem><RadioDot $on={on} />{children}</RadioItem>;

export default function App() {
  return (
    <Screen>
      <GlobalStyle />
      <TopPanel>
        <UbuntuMark />
        <PanelText $gap={6}>Aplicaciones</PanelText>
        <PanelText $gap={11} $ls={-0.15}>Lugares</PanelText>
        <Slot $gap={12}><Chromium /></Slot>
        <Slot $gap={14}><DarkOrb /></Slot>
        <Slot $gap={12}><Eclipse /></Slot>
        <Slot $gap={13}><RedTerm /></Slot>
        <Tray>
          <Dropbox />
          <Slot $gap={17}><Wifi /></Slot>
          <LangBox>Es</LangBox>
          <Slot $gap={15}><Battery /></Slot>
          <Slot $gap={14}><Volume /></Slot>
          <PanelText $gap={14} $ls={-0.2}>17:16</PanelText>
          <Slot $gap={15}><Gear /></Slot>
        </Tray>
      </TopPanel>
      <TitleBar>
        <WinButton $close><svg width="6" height="6" stroke="#5a2310" strokeWidth="1.300"><path d="M.5 .5l5 5M5.500 .5l-5 5" /></svg></WinButton>
        <WinButton><svg width="8" height="6" stroke="#3c3b37" strokeWidth="1.300"><path d="M0 3h8" /></svg></WinButton>
        <WinButton><svg width="7" height="7" stroke="#3c3b37" strokeWidth="1.200" fill="none"><path d="M.7 .7h5.600v5.600H.7z" /></svg></WinButton>
        <TitleText>Sistema de seguimiento de estaciones Bizi de Zaragoza - Chromium</TitleText>
      </TitleBar>
      <TabStrip>
        <Tab active icon={<Xampp />} label="Sistema de seguir" fade={70} ls={-0.1} />
        <Tab icon={<Gmail w={16} h={14} />} label="Recibidos (3.574)" fade={82} ls={0.1} />
        <Tab icon={<GoogleTile />} label="a href bootstrap -" fade={80} />
        <Tab icon={<CodeTile />} label="html5: texto tach" fade={82} />
        <svg width="46" height="25" viewBox="0 0 46 25">
          <path d="M8.500 6.500h20q3 0 4 3l3.500 8q1 3-2 3H17q-3 0-4-3L9 8.500q-1-2-.5-2z" transform="translate(-5 0)" fill="#535150" stroke="#858380" />
        </svg>
      </TabStrip>
      <Toolbar>
        <AddressRow>
          <NavArrow back />
          <Slot $gap={13}><NavArrow /></Slot>
          <Slot $gap={13}><Reload /></Slot>
          <AddressBox>
            <PageIcon />
            <Host>localhost</Host>/seguimiento-Bizi/
            <AddressIcon><Star /></AddressIcon>
          </AddressBox>
          <Slot $gap={9}><Cast /></Slot>
          <Slot $gap={14}>
            <svg width="14" height="14" stroke="#4e4c46" strokeWidth="2.600"><path d="M0 2h14M0 7h14M0 12h14" /></svg>
          </Slot>
        </AddressRow>
        <BookmarkRow>
          <Bookmark $w={131} $gap={7} $ls={0.05}><Apps />Aplicaciones</Bookmark>
          <Bookmark $w={107} $gap={6}><Facebook />Facebook</Bookmark>
          <Bookmark $w={91} $ls={0.2}><Twitter />Twitter</Bookmark>
          <Bookmark $w={75} $gap={6}><Gmail />Gmail</Bookmark>
          <Bookmark $w={93}><Moodle />Moodle</Bookmark>
          <Bookmark $ls={0.15}><Translate />Traductor</Bookmark>
          <OtherBookmarks><Bookmark $ls={0.12}><Folder />Otros marcadores</Bookmark></OtherBookmarks>
        </BookmarkRow>
      </Toolbar>
      <Page>
        <LeftColumn>
          <StatsLink>&gt; Control estadístico</StatsLink>
          <Legend $color="#ff0000">Llegar a una estación Bizi</Legend>
          <AddressInput placeholder="Dirección de comienzo" />
          <Label>Selecciona estación de Bizi:</Label>
          <Select>C/ Doctor Iranzo - C/ Es</Select>
          <RadioGrid>
            <Radio>Pie</Radio>
            <Radio on>Coche</Radio>
            <Radio>Transporte Público</Radio>
            <Radio>Bici</Radio>
          </RadioGrid>
          <ActionButton $danger>Buscar ruta</ActionButton>
        </LeftColumn>
        <MapColumn><MapPanel /></MapColumn>
        <RightColumn>
          <Legend $color="#0000ff">Previsión Meteorológica</Legend>
          <ForecastTable />
          <Label>Municipio:</Label>
          <Select>Zaragoza</Select>
          <Label>Formato:</Label>
          <Select>xml</Select>
          <ActionButton $top={20}>Obtener información meteorológica</ActionButton>
        </RightColumn>
      </Page>
      <TaskBar>
        <DesktopButton>
          <svg width="16" height="15" viewBox="0 0 16 15">
            <rect width="16" height="14.500" rx="1" fill="#55103f" />
            <rect y="0" width="16" height="3" fill="#efe9dd" />
            <rect x="5" y="4" width="10" height="9" fill="#c863c0" />
            <path d="M2.500 4.500v8" stroke="#fff" strokeWidth="1.300" strokeDasharray="2 1" />
          </svg>
        </DesktopButton>
        <Task $w={177} $active><TaskIcon><Chromium s={17} /></TaskIcon>Sistema de segui…</Task>
        <Task $w={178}><TaskIcon $dim><RedTerm s={16} /></TaskIcon>[root@me-Travel…</Task>
        <Task $w={178}><TaskIcon $dim><RedTerm s={16} /></TaskIcon>[me@me-TravelM…</Task>
        <Task $w={177} $pl={13}><TaskIcon><Editor /></TaskIcon>index.php (/opt/l…</Task>
        <Task $w={178}><TaskIcon><Pdf /></TaskIcon>[Enunciado traba…</Task>
        <Task $w={178}><TaskIcon><RedTerm s={16} /></TaskIcon>root@me-Travel…</Task>
        <Task $w={179}><TaskIcon><RedTerm s={16} /></TaskIcon>me@me-TravelM…</Task>
        <Workspaces><Workspace><Chromium s={16} /></Workspace></Workspaces>
      </TaskBar>
    </Screen>
  );
}
